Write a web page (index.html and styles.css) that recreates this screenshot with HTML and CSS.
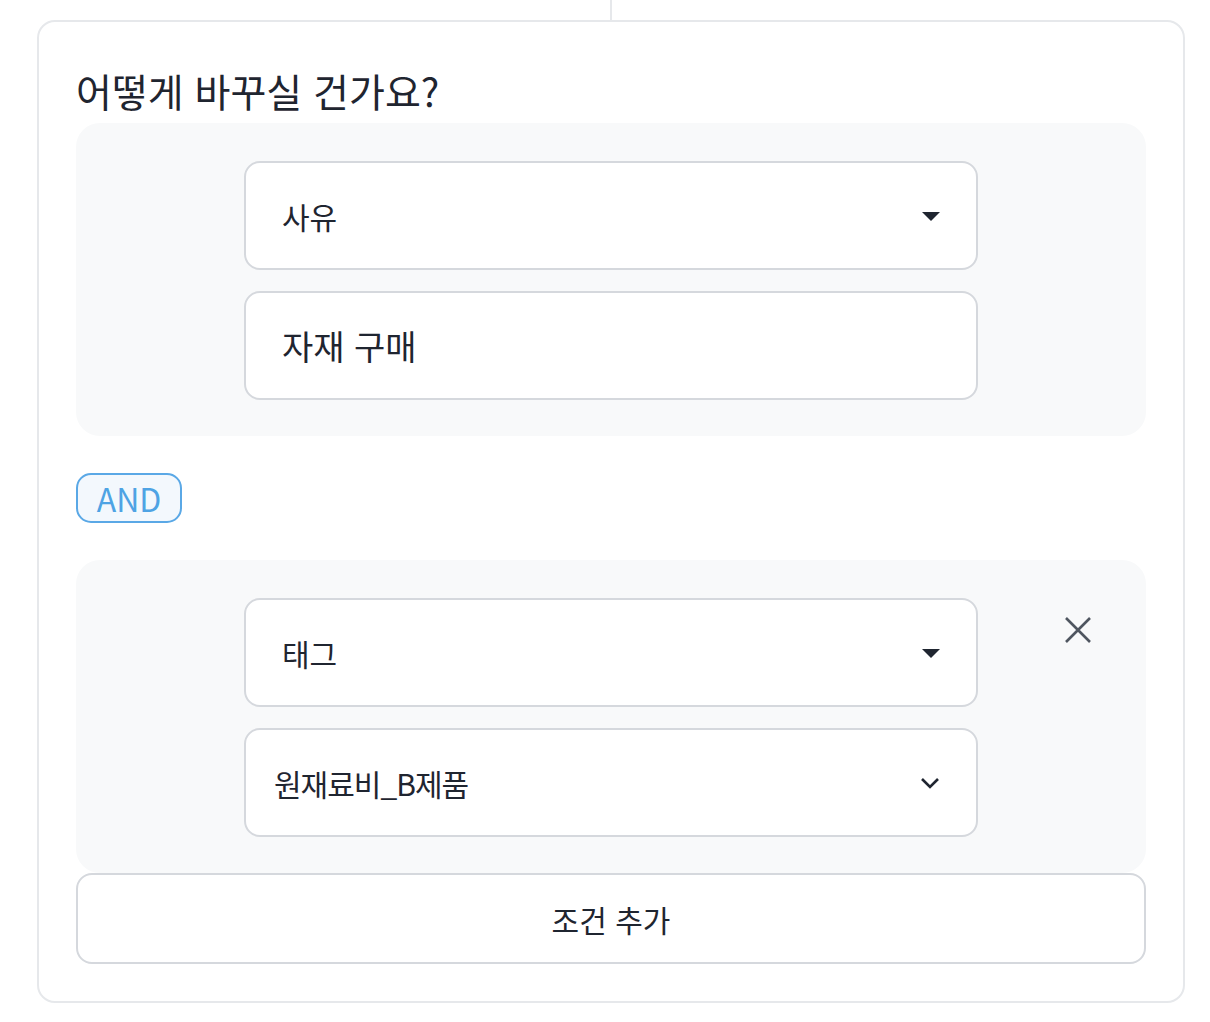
FILE: index.html
```html
<!DOCTYPE html>
<html lang="ko">

<head>
    <meta charset="UTF-8">
    <meta name="viewport" content="width=device-width, initial-scale=1.0">
    <title>조건 편집</title>
    <link rel="stylesheet" href="styles.css">
</head>

<body>
    <div class="wrap">
        <div class="link"></div>
        <div class="card">
            <h2 class="title">어떻게 바꾸실 건가요?</h2>

            <!-- 첫 번째 조건 -->
            <div class="group">
                <div class="field">
                    <span>사유</span>
                    <svg class="caret" width="18" height="10" viewBox="0 0 18 10">
                        <path d="M0 0 H18 L9 9 Z" fill="#1f2530" />
                    </svg>
                </div>
                <div class="field field-big">
                    <span>자재 구매</span>
                </div>
            </div>

            <div class="and">AND</div>

            <!-- 두 번째 조건 -->
            <div class="group">
                <div class="field">
                    <span>태그</span>
                    <svg class="caret" width="18" height="10" viewBox="0 0 18 10">
                        <path d="M0 0 H18 L9 9 Z" fill="#1f2530" />
                    </svg>
                </div>
                <button class="remove" type="button">
                    <svg width="30" height="30" viewBox="0 0 30 30">
                        <path d="M3 3 L27 27 M27 3 L3 27" stroke="#4f5660" stroke-width="2.6" fill="none" />
                    </svg>
                </button>
                <div class="field field-select">
                    <span>원재료비_B제품</span>
                    <svg class="chev" width="20" height="12" viewBox="0 0 20 12">
                        <path d="M2 2 L10 10 L18 2" stroke="#1f2530" stroke-width="2.6" fill="none" />
                    </svg>
                </div>
            </div>

            <button class="add" type="button">조건 추가</button>
        </div>
    </div>
</body>

</html>
```

FILE: styles.css
```css
* {
    box-sizing: border-box;
}

body {
    margin: 0;
    background-color: #fff;
    color: #1f2530;
    font-family: "Noto Sans CJK KR", "Noto Sans", sans-serif;
}

.wrap {
    width: 1148px;
    margin-left: 37px;
}

.link {
    width: 2px;
    height: 20px;
    margin: 0 auto;
    background-color: #e6e8eb;
}

.card {
    border: 2px solid #e6e8eb;
    border-radius: 18px;
    padding: 43px 37px 37px;
    height: 983px;
}

.title {
    margin: 0 0 8px;
    font-size: 39px;
    font-weight: 400;
    line-height: 50px;
}

.group {
    display: grid;
    grid-template-columns: 1fr 734px 1fr;
    row-gap: 21px;
    padding: 38px 0 36px;
    border-radius: 24px;
    background-color: #f8f9fa;
}

.field {
    grid-column: 2;
    display: flex;
    align-items: center;
    justify-content: space-between;
    height: 109px;
    padding: 0 36px;
    border: 2px solid #d5d8dd;
    border-radius: 16px;
    background-color: #fff;
    font-size: 30px;
}

.field-big {
    font-size: 34px;
}

.field-select {
    padding-left: 28px;
    letter-spacing: -1px;
}

.caret {
    margin-top: 2px;
}

.remove {
    grid-column: 3;
    grid-row: 1;
    justify-self: end;
    align-self: start;
    margin: 17px 53px 0 0;
    padding: 0;
    border: 0;
    background: none;
    width: 30px;
    height: 30px;
}

.and {
    display: flex;
    align-items: center;
    justify-content: center;
    width: 106px;
    height: 50px;
    margin: 37px 0;
    border: 2px solid #5aa8e6;
    border-radius: 15px;
    background-color: #f3f8fd;
    color: #4ea3e4;
    font-size: 32px;
}

.add {
    display: block;
    width: 100%;
    height: 91px;
    border: 2px solid #d5d8dd;
    border-radius: 16px;
    background-color: #fff;
    color: #1f2530;
    font-family: inherit;
    font-size: 30px;
}
```
